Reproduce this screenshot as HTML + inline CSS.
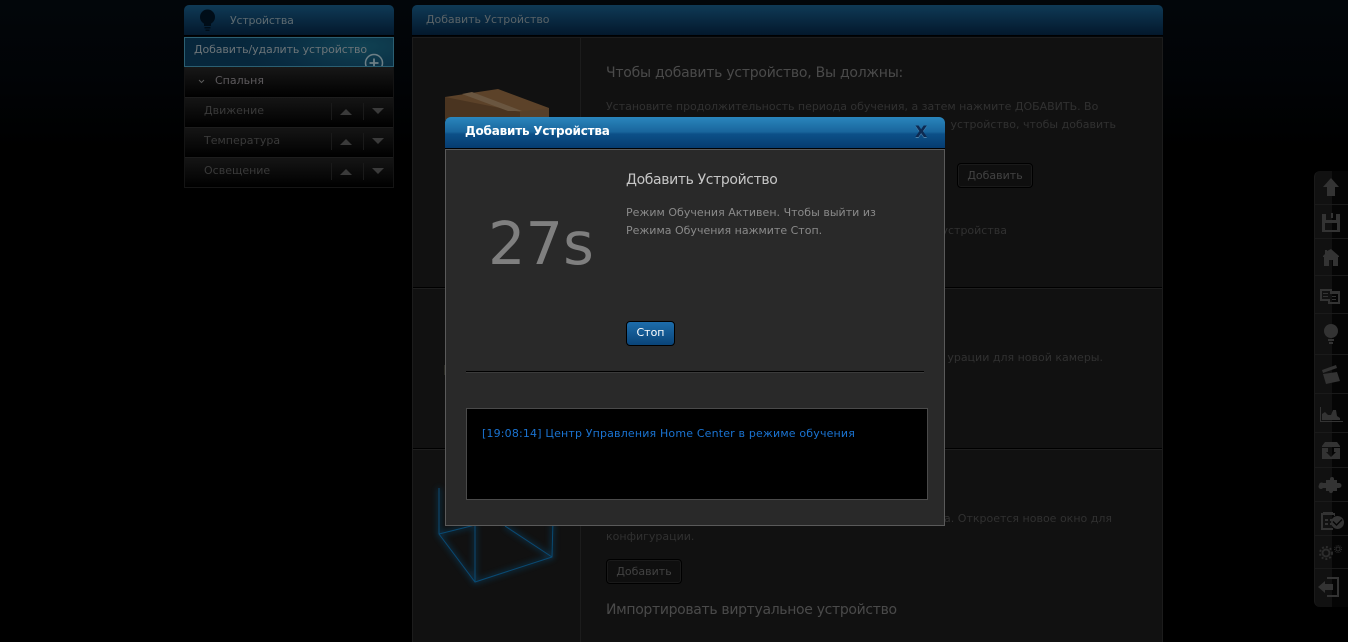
<!DOCTYPE html>
<html lang="ru"><head><meta charset="utf-8"><title>Добавить Устройство</title>
<style>
html,body{margin:0;padding:0;width:1348px;height:642px;overflow:hidden;background:#000}
body{position:relative;font-family:"DejaVu Sans",sans-serif;font-size:11px;color:#444}
div,span,svg{position:absolute}
.t{white-space:nowrap;line-height:16px}
.r{text-align:right}
.btn{border:1px solid #000;border-radius:4px;background:#0f0f0f;color:#424242;text-align:center;box-sizing:border-box;line-height:24px;height:25px;width:76px;box-shadow:0 0 0 1px #1a1a1a inset}
.row{left:185px;width:208px;height:30px;background:linear-gradient(#151515,#000);border-top:1px solid #1d1d1d;box-sizing:border-box}
.sep{top:5px;width:1px;height:17px;background:#1a1a1a}
.up{width:0;height:0;border-left:6px solid transparent;border-right:6px solid transparent;border-bottom:6px solid #3a3a3a;top:11px;left:155px}
.dn{width:0;height:0;border-left:6px solid transparent;border-right:6px solid transparent;border-top:6px solid #3a3a3a;top:10px;left:187px}
.tb{left:1314px;width:34px;height:1px;background:#1a1a1a}
</style></head><body>
<div style="left:0;top:0;width:1348px;height:150px;background:linear-gradient(#02060a,#010305 60%,#000)"></div>

<!-- sidebar -->
<div style="left:184px;top:5px;width:210px;height:31px;border-radius:5px 5px 0 0;background:linear-gradient(#0f3a56,#03182c);border-bottom:1px solid #000;box-sizing:border-box"></div>
<svg style="left:198px;top:9px" width="20" height="24" viewBox="0 0 20 24"><circle cx="9.500" cy="8" r="7.500" fill="#000d18"/><path d="M6 13h7v4H6zM6.500 18h6v1.500h-6zM7.500 20.500h4V22h-4z" fill="#000d18"/></svg>
<div class="t" style="left:230px;top:13px;color:#5d6a70;letter-spacing:-.2px">Устройства</div>
<div style="left:184px;top:37px;width:210px;height:30px;box-sizing:border-box;border:1px solid #2b5f72;background:radial-gradient(ellipse 120px 40px at 85% 30%,#104152,#092c42 70%,#07273c);overflow:hidden">
<svg style="left:178px;top:14px" width="22" height="22" viewBox="0 0 22 22"><circle cx="11" cy="11" r="8.500" fill="none" stroke="#6d7f86" stroke-width="1.500"/><path d="M11 6.500v9M6.500 11h9" stroke="#6d7f86" stroke-width="1.800"/></svg>
</div>
<div class="t" style="left:194px;top:42px;color:#6c7478;letter-spacing:-.11px">Добавить/удалить устройство</div>
<div class="row" style="top:67px;border-top:0;background:linear-gradient(#181818,#000)"></div>
<svg style="left:198px;top:79px" width="7" height="5" viewBox="0 0 7 5"><path d="M1 1l2.500 2.500L6 1" fill="none" stroke="#5a5a5a"/></svg>
<div class="t" style="left:215px;top:73px;color:#5d5a5d">Спальня</div>

<div class="row" style="top:97px"><div class="t" style="left:19px;top:5px;color:#3a3a3a">Движение</div><div class="sep" style="left:146px"></div><div class="sep" style="left:178px"></div><div class="up"></div><div class="dn"></div></div>
<div class="row" style="top:127px"><div class="t" style="left:19px;top:5px;color:#3a3a3a">Температура</div><div class="sep" style="left:146px"></div><div class="sep" style="left:178px"></div><div class="up"></div><div class="dn"></div></div>
<div class="row" style="top:157px;height:31px;border-bottom:1px solid #151515"><div class="t" style="left:19px;top:5px;color:#3a3a3a">Освещение</div><div class="sep" style="left:146px"></div><div class="sep" style="left:178px"></div><div class="up"></div><div class="dn"></div></div>
<div style="left:184px;top:67px;width:1px;height:121px;background:#141414"></div>
<div style="left:393px;top:67px;width:1px;height:121px;background:#141414"></div>

<!-- main panel -->
<div style="left:412px;top:5px;width:751px;height:31px;border-radius:5px 5px 0 0;background:linear-gradient(#0f3a56,#03182c);border-bottom:1px solid #000;box-sizing:border-box"></div>
<div class="t" style="left:426px;top:12px;color:#5a6367;letter-spacing:-.06px">Добавить Устройство</div>
<div style="left:412px;top:37px;width:751px;height:605px;background:#111;border-left:1px solid #1c1c1c;border-right:1px solid #1c1c1c;box-sizing:border-box"></div>
<div style="left:580px;top:38px;width:1px;height:604px;background:#1c1c1c"></div>
<div style="left:413px;top:37px;width:749px;height:1px;background:#1d1d1d"></div>
<div style="left:413px;top:287px;width:749px;height:1px;background:#000"></div>
<div style="left:413px;top:288px;width:749px;height:1px;background:#1e1e1e"></div>
<div style="left:413px;top:448px;width:749px;height:1px;background:#000"></div>
<div style="left:413px;top:449px;width:749px;height:1px;background:#1e1e1e"></div>

<!-- box -->
<svg style="left:440px;top:85px" width="115" height="35" viewBox="0 0 115 35"><path d="M5 12L58 4l51 19v12H5z" fill="#5c4229"/><path d="M5 12l75 15v8H5z" fill="#4a3420"/><path d="M80 27l29-4v12H80z" fill="#57402a"/><path d="M22 9l10-2 50 19-14 0z" fill="#6a5640"/></svg>
<!-- cube -->
<svg style="left:430px;top:480px" width="135" height="110" viewBox="0 0 135 110">
<defs><filter id="g" x="-20%" y="-20%" width="140%" height="140%"><feGaussianBlur stdDeviation="3"/></filter></defs>
<g fill="none" stroke="#0b5a8c" stroke-width="4" filter="url(#g)" opacity=".4"><path d="M9 8v46l36 48 77-25 1-37M9 54l36-9v57M122 77L75 46"/></g>
<g fill="none" stroke="#084a73" stroke-width="1"><path d="M9 8v46l36 48 77-25 1-37M9 54l36-9v57M122 77L75 46"/></g>
</svg>
<div style="left:444px;top:365px;width:1px;height:10px;background:#2a2a24"></div>

<!-- content text -->
<div class="t" style="left:606px;top:65px;font-size:14px;color:#4a4a4a;letter-spacing:-.25px">Чтобы добавить устройство, Вы должны:</div>
<div class="t" style="left:606px;top:99px;color:#313131;letter-spacing:-.02px">Установите продолжительность периода обучения, а затем нажмите ДОБАВИТЬ. Во</div>
<div class="t r" style="right:232px;top:117px;color:#313131">устройство, чтобы добавить</div>
<div class="btn" style="left:957px;top:163px">Добавить</div>
<div class="t r" style="right:341px;top:223px;color:#313131">устройства</div>
<div class="t r" style="right:245px;top:350px;color:#313131">урации для новой камеры.</div>
<div class="t r" style="right:236px;top:511px;color:#313131">а. Откроется новое окно для</div>
<div class="t" style="left:606px;top:529px;color:#313131">конфигурации.</div>
<div class="btn" style="left:606px;top:559px">Добавить</div>
<div class="t" style="left:606px;top:602px;font-size:14px;color:#4a4a4a;letter-spacing:-.33px">Импортировать виртуальное устройство</div>

<!-- right toolbar -->
<div style="left:1314px;top:171px;width:34px;height:436px;background:linear-gradient(90deg,#111 0,#111 17px,#050505 17px);border-radius:6px 0 0 6px;border-left:1px solid #1a1a1a;box-sizing:border-box"></div>
<div class="tb" style="top:204px"></div><div class="tb" style="top:238px"></div><div class="tb" style="top:275px"></div><div class="tb" style="top:313px"></div><div class="tb" style="top:354px"></div><div class="tb" style="top:393px"></div><div class="tb" style="top:432px"></div><div class="tb" style="top:467px"></div><div class="tb" style="top:501px"></div><div class="tb" style="top:535px"></div><div class="tb" style="top:568px"></div>
<svg style="left:1314px;top:171px" width="34" height="436" viewBox="0 0 34 436">
<g fill="#333">
<path d="M17 7l8 9h-4v9h-8v-9H9z"/>
<path d="M8 43h4v6h10v-6h4v18H8zM11 52v7h12v-7z" fill-rule="evenodd"/><path d="M17 42h2v5h-2z"/>
<path d="M17 78l8 7v1h-1v9h-5v-6h-4v6h-5v-9H9v-1l2-2v-4h2v1z"/>
<path d="M6 118h12v2h8v13H14v-3H6zM8 120v8h8v-8zM16 123v8h8v-8z" fill-rule="evenodd"/>
<path d="M9 122h5v1H9zM9 125h5v1H9zM18 125h4v1h-4zM18 128h4v1h-4z"/>
<circle cx="17" cy="160" r="7"/><path d="M14 168h6v2h-6zM15 171h4v2h-4z"/>
<path d="M8 199l14-5 1 3-14 5zM9 203l14-2 3 9-14 3z"/>
<path d="M6 236h1v14h22v1H6z"/><path d="M8 249v-6l3-2 3 3 3 0 2-5 3 0 1 6 3 2v2z"/>
<path d="M8 275l3-4h12l3 4v1H8zM8 277h18v11H8zM14 277v4h-2l5 5 5-5h-2v-4z" fill-rule="evenodd"/>
<path d="M5 314a2.500 2.500 0 0 1 4-2h3v-3h4v-1a2 2 0 0 1 4 0v1h3v3h2a2.500 2.500 0 0 1 0 5h-2v3h-4a2 2 0 0 1-4 0h-3v-3H9a2.500 2.500 0 0 1-4-3z"/>
<path d="M7 342h14v3h-1v-1H9v13h10v2H7zM11 348h3v2h-3zM16 348h3v2h-3zM11 352h3v2h-3zM16 352h3v2h-3z"/><path d="M9 341h10v3H9z"/>
<path d="M24 344a6.500 6.500 0 1 0 .1 0zM20 349l3 3 5-5 1 1-6 6-4-4z" fill-rule="evenodd" transform="translate(-.5 1)"/>
<path d="M4 416l7-6v3h8v6h-8v3z"/>
<path d="M13 406h12v20H13v-2h10v-16H13z"/>
</g>
<g fill="none" stroke="#2c2c2c">
<circle cx="12" cy="382" r="3.500" stroke-width="2"/><circle cx="12" cy="382" r="6" stroke-dasharray="2 2" stroke-width="2"/>
<circle cx="24" cy="378" r="2"/><circle cx="24" cy="378" r="3.500" stroke-dasharray="1 1"/>
</g>
</svg>

<!-- modal -->
<div style="left:445px;top:117px;width:500px;height:32px;border-radius:6px 6px 0 0;background:linear-gradient(#2a86bd,#19659c 48%,#0c5088 55%,#063c70);box-sizing:border-box;border-bottom:1px solid #000"></div>
<div class="t" style="left:465px;top:123px;font-size:12px;font-weight:bold;color:#fff;letter-spacing:-.2px">Добавить Устройства</div>
<div class="t" style="left:915px;top:123px;font-size:16px;font-weight:bold;color:#0d2a52;line-height:18px;text-shadow:0 1px 0 #4d7fa6">X</div>
<div style="left:445px;top:149px;width:500px;height:377px;background:#292929;border:1px solid #5a5a5a;box-sizing:border-box"></div>
<div class="t" style="left:488px;top:210px;font-size:59px;line-height:68px;color:#7f7f7f">27s</div>
<div class="t" style="left:626px;top:172px;font-size:14px;color:#c6c6c6;letter-spacing:-.37px">Добавить Устройство</div>
<div class="t" style="left:626px;top:205px;color:#8a8a8a;letter-spacing:.02px">Режим Обучения Активен. Чтобы выйти из</div>
<div class="t" style="left:626px;top:223px;color:#8a8a8a">Режима Обучения нажмите Стоп.</div>
<div style="left:626px;top:321px;width:49px;height:25px;box-sizing:border-box;border:1px solid #000;border-radius:4px;background:linear-gradient(#1d6dab,#0a4478);color:#fff;text-align:center;line-height:21px">Стоп</div>
<div style="left:466px;top:371px;width:458px;height:1px;background:#000"></div>
<div style="left:466px;top:372px;width:458px;height:1px;background:#3b3b3b"></div>
<div style="left:466px;top:408px;width:462px;height:92px;box-sizing:border-box;background:#000;border:1px solid #4a4a4a"></div>
<div class="t" style="left:482px;top:426px;color:#1a73d1;letter-spacing:.17px">[19:08:14] Центр Управления Home Center в режиме обучения</div>
</body></html>
